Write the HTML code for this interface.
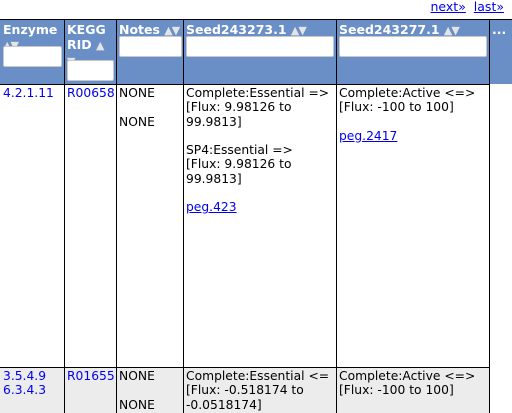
<!DOCTYPE html>
<html><head><style>
body{margin:0;width:512px;height:413px;overflow:hidden;background:#fff;font-family:"DejaVu Sans",Verdana,sans-serif;font-size:12.3px;position:relative}
.a{position:absolute}
.hd{background:#6a8ec6;top:19px;height:65px}
.v{position:absolute;width:1px;background:#000}
.h{position:absolute;height:1px;background:#000}
.t{position:absolute;line-height:14.3px;white-space:nowrap;color:#000}
.t.ht{color:#fff;font-weight:bold;line-height:15px;font-size:12.5px}
.in{position:absolute;background:#fff;border:1px solid #c8c8c8;border-radius:2px;height:19px}
u{color:#00e}
.ar{font-size:11px;color:#e4e4e4;letter-spacing:-1px;font-weight:normal}
</style></head><body>
<div class="a" style="right:8px;top:0;line-height:14px;font-size:12.5px"><u>next»</u>&nbsp; <u>last»</u></div>
<div class="a hd" style="left:0;width:512px"></div>
<div class="a" style="left:0;top:367px;width:489px;height:46px;background:#ececec"></div>
<div class="h" style="left:0;top:19px;width:512px"></div>
<div class="h" style="left:0;top:84px;width:490px"></div>
<div class="h" style="left:0;top:367px;width:490px"></div>
<div class="v" style="left:64px;top:19px;height:394px"></div>
<div class="v" style="left:116px;top:19px;height:394px"></div>
<div class="v" style="left:183px;top:19px;height:394px"></div>
<div class="v" style="left:336px;top:19px;height:394px"></div>
<div class="v" style="left:489px;top:19px;height:394px"></div>
<div class="t ht" style="left:3px;top:22px">Enzyme<br><span class="ar">▲▼</span></div>
<div class="in" style="left:3px;top:46px;width:57px"></div>
<div class="t ht" style="left:67px;top:22px">KEGG<br>RID <span class="ar">▲</span><br><span class="ar">▼</span></div>
<div class="in" style="left:67px;top:60px;width:45px"></div>
<div class="t ht" style="left:119px;top:22px">Notes <span class="ar">▲▼</span></div>
<div class="in" style="left:119px;top:36px;width:61px"></div>
<div class="t ht" style="left:186px;top:22px">Seed243273.1 <span class="ar">▲▼</span></div>
<div class="in" style="left:186px;top:36px;width:146px"></div>
<div class="t ht" style="left:339px;top:22px">Seed243277.1 <span class="ar">▲▼</span></div>
<div class="in" style="left:339px;top:36px;width:146px"></div>
<div class="t ht" style="left:492px;top:22px">...</div>

<div class="t" style="left:3px;top:86px;color:#00e">4.2.1.11</div>
<div class="t" style="left:67px;top:86px;color:#00e">R00658</div>
<div class="t" style="left:119px;top:86px">NONE<br><br>NONE</div>
<div class="t" style="left:186px;top:86px">Complete:Essential =&gt;<br>[Flux: 9.98126 to<br>99.9813]<br><br>SP4:Essential =&gt;<br>[Flux: 9.98126 to<br>99.9813]<br><br><u>peg.423</u></div>
<div class="t" style="left:339px;top:86px">Complete:Active &lt;=&gt;<br>[Flux: -100 to 100]<br><br><u>peg.2417</u></div>

<div class="t" style="left:3px;top:369px;color:#00e">3.5.4.9<br>6.3.4.3</div>
<div class="t" style="left:67px;top:369px;color:#00e">R01655</div>
<div class="t" style="left:119px;top:369px">NONE<br><br>NONE</div>
<div class="t" style="left:186px;top:369px">Complete:Essential &lt;=<br>[Flux: -0.518174 to<br>-0.0518174]</div>
<div class="t" style="left:339px;top:369px">Complete:Active &lt;=&gt;<br>[Flux: -100 to 100]</div>
</body></html>
